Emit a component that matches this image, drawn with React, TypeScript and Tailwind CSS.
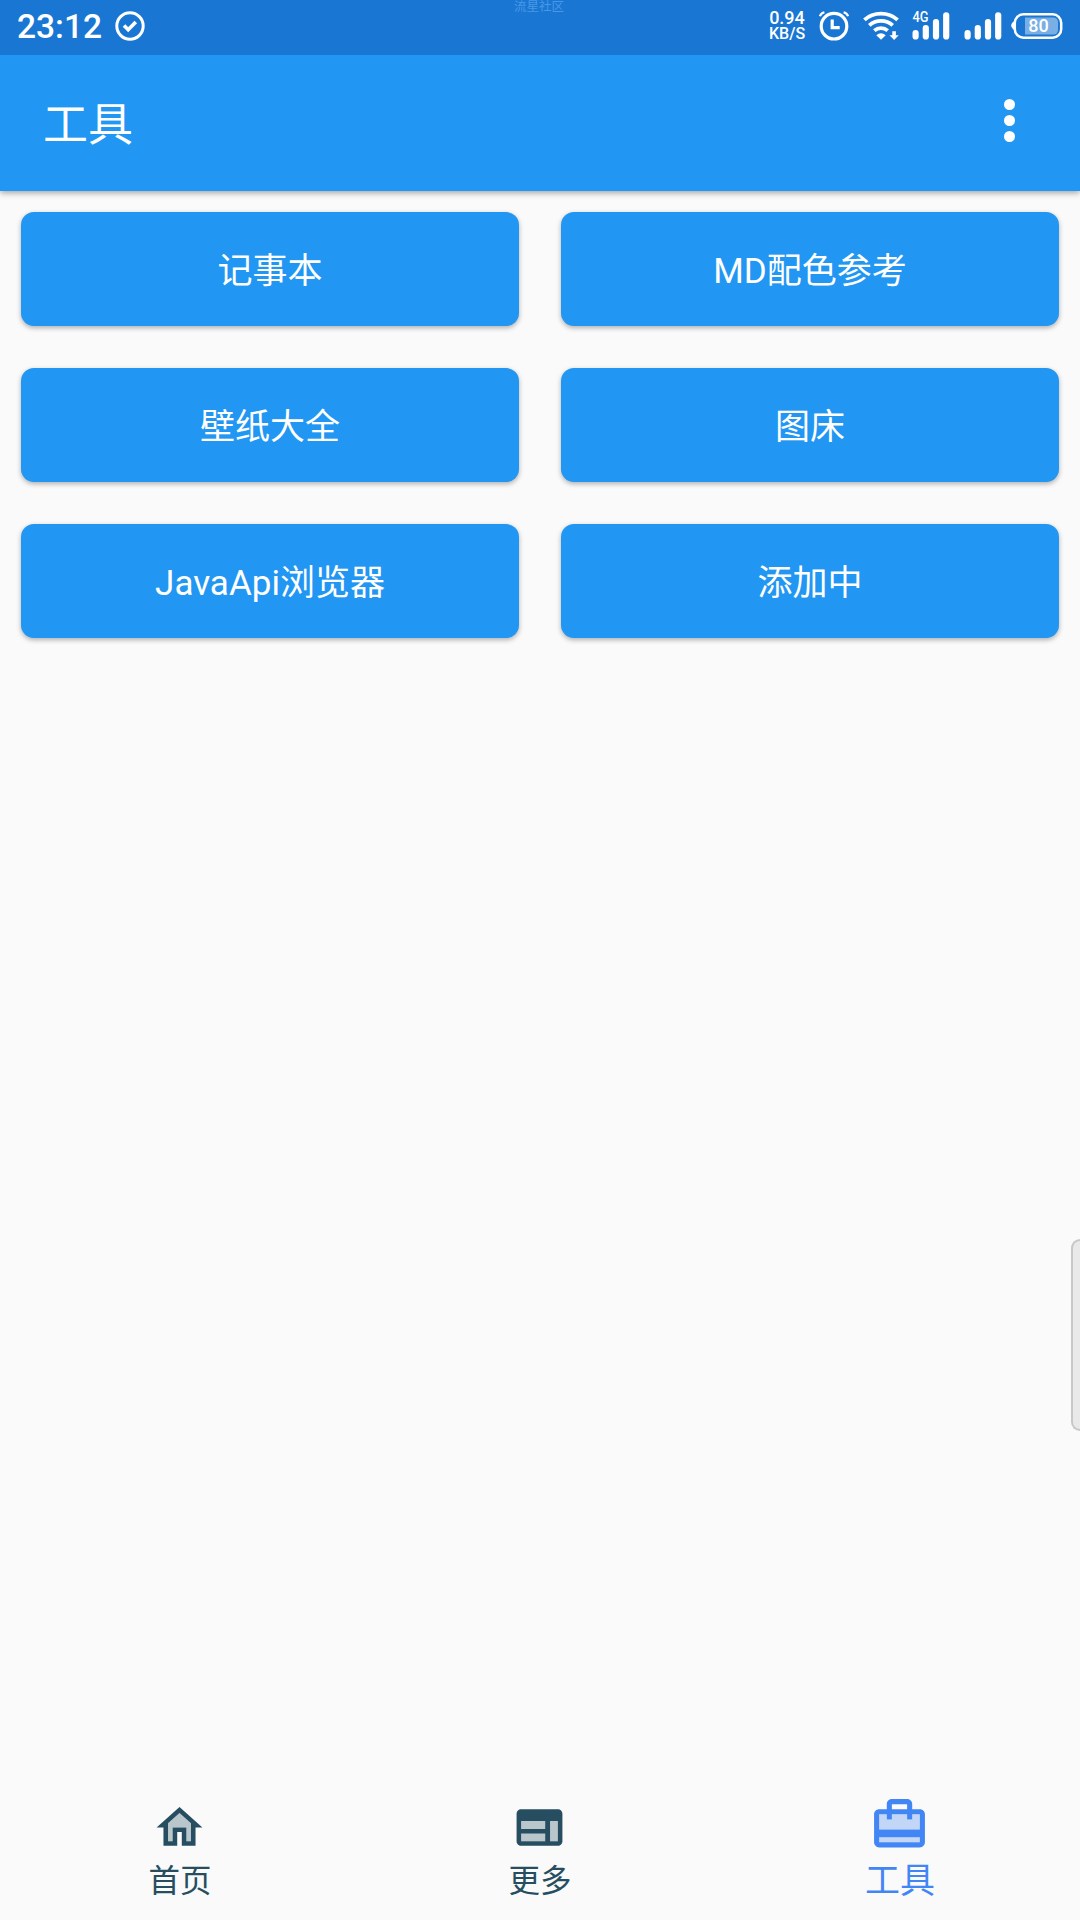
import clsx from 'clsx'
import type { ReactNode } from 'react'

const tools = ['记事本', 'MD配色参考', '壁纸大全', '图床', 'JavaApi浏览器', '添加中']

function CheckIcon() {
  return (
    <svg width="30" height="30" viewBox="0 0 30 30" fill="none" stroke="currentColor">
      <circle cx="15" cy="15" r="13.2" strokeWidth="3" />
      <path d="M9 14.6l4.2 4.2 7.6-7.8" strokeWidth="3.6" />
    </svg>
  )
}

function AlarmIcon() {
  return (
    <svg width="30" height="30" viewBox="0 0 30 30" fill="none" stroke="currentColor">
      <circle cx="15" cy="15.2" r="12.8" strokeWidth="3.2" />
      <path d="M13.2 8.5v8.2h7.5" strokeWidth="3.2" />
      <path d="M.9 5.2Q2 2 5.4 1.2M29.1 5.2Q28 2 24.6 1.2" strokeWidth="2.2" />
    </svg>
  )
}

function WifiIcon() {
  return (
    <svg width="36" height="30" viewBox="0 0 36 30" fill="none" stroke="currentColor">
      <path d="M1.4 8.8C10.5.6 25.5.6 34.6 8.8" strokeWidth="3.8" />
      <path d="M6.3 14.3C12.8 8.5 23.2 8.5 29.7 14.3" strokeWidth="3.8" />
      <path d="M11.3 19.7C15.2 16.2 20.8 16.2 24.7 19.7" strokeWidth="3.8" />
      <path d="M13.3 24.2q4.7-3.8 9.4 0L18 28.8z" fill="currentColor" stroke="none" />
      <path d="M29.3 20.3h3.6v4h2.8L31.1 29l-4.6-4.7h2.8z" fill="currentColor" stroke="none" />
    </svg>
  )
}

function SignalIcon({ label }: { label?: string }) {
  return (
    <svg width="38" height="30" viewBox="0 0 38 30" fill="currentColor" className="overflow-visible">
      <rect x="0.5" y="19" width="6.2" height="9.5" rx="3.1" />
      <rect x="10.7" y="14" width="6.2" height="14.5" rx="3.1" />
      <rect x="20.9" y="8" width="6.2" height="20.5" rx="3.1" />
      <rect x="31.1" y="1.2" width="6.2" height="27.3" rx="3.1" />
      {label && (
        <text x="0.5" y="11.4" fontSize="14" fontWeight="500" textLength="16" lengthAdjust="spacingAndGlyphs">
          {label}
        </text>
      )}
    </svg>
  )
}

function BatteryIcon({ level }: { level: number }) {
  return (
    <svg width="52" height="26" viewBox="0 0 52 26" fill="currentColor">
      <path d="M4 7.5Q.2 10 .2 12.5T4 17.5z" />
      <rect x="3.8" y="1.3" width="46.4" height="23.4" rx="8.5" fill="none" stroke="currentColor" strokeWidth="2.5" />
      <path d="M14 4.5h28.5a4.5 4.5 0 0 1 4.5 4.500v8a4.5 4.5 0 0 1-4.5 4.500H14z" opacity=".42" />
      <text x="27.6" y="19.2" fontSize="18" fontWeight="500" textAnchor="middle">
        {level}
      </text>
    </svg>
  )
}

function HomeIcon() {
  return (
    <>
      <path d="M7 10.19V18h2v-6h6v6h2v-7.81l-5-4.5z" opacity=".3" />
      <path d="M12 3L2 12h3v8h6v-6h2v6h6v-8h3L12 3zm5 15h-2v-6H9v6H7v-7.81l5-4.5 5 4.5V18z" />
    </>
  )
}

function WebIcon() {
  return (
    <>
      <path d="M4 9h11v4H4zm0 5h11v4H4zm12-5h4v9h-4z" opacity=".3" />
      <path d="M20 4H4c-1.1 0-2 .9-2 2v12c0 1.1.9 2 2 2h16c1.1 0 2-.9 2-2V6c0-1.1-.9-2-2-2zM14.5 18H4v-3.4h10.5V18zm0-5.3H4V9.2h10.5v3.5zM20 18h-3.4V9.2H20V18z" />
    </>
  )
}

function TravelIcon() {
  return (
    <>
      <path d="M4 17h16v2H4zm13-7h-2V8H9v2H7V8H4v6h16V8h-3z" opacity=".3" />
      <path d="M20 6h-3V4c0-1.11-.89-2-2-2H9c-1.11 0-2 .89-2 2v2H4c-1.11 0-2 .89-2 2v11c0 1.11.89 2 2 2h16c1.11 0 2-.89 2-2V8c0-1.11-.89-2-2-2zM9 4h6v2H9V4zm11 15H4v-2h16v2zm0-5H4V8h3v2h2V8h6v2h2V8h3v6z" />
    </>
  )
}

function NavItem({ label, active, children }: { label: string; active?: boolean; children: ReactNode }) {
  return (
    <button
      className={clsx(
        'flex flex-1 flex-col items-center',
        active ? 'pt-[9px] text-[#4285f4]' : 'pt-[15px] text-[#264e60]',
      )}
    >
      <svg
        viewBox="0 0 24 24"
        fill="currentColor"
        className={clsx('mr-[2px]', active ? 'size-[61px]' : 'size-[55px]')}
      >
        {children}
      </svg>
      <span className={clsx('mt-[4px] leading-[46px]', active ? 'text-[35px]' : 'text-[31.5px]')}>{label}</span>
    </button>
  )
}

function StatusBar() {
  return (
    <div className="relative flex h-[55px] justify-between bg-[#1976d2] pr-[17px] pl-[17px] text-white">
      <div className="flex pt-[11px]">
        <span className="w-[98px] text-[33.5px] leading-[31px] font-medium">23:12</span>
        <CheckIcon />
      </div>
      <span className="absolute top-0 left-[514px] text-[12.5px] leading-[13px] text-[#4a98e6]">流星社区</span>
      <div className="flex pt-[10px]">
        <div className="mr-[13px] flex w-[38px] flex-col items-center font-medium">
          <span className="text-[18px] leading-[16px]">0.94</span>
          <span className="text-[16px] leading-[16px]">KB/S</span>
        </div>
        <div className="mr-[14px] pt-px">
          <AlarmIcon />
        </div>
        <div className="mr-[13px] pt-px">
          <WifiIcon />
        </div>
        <div className="mr-[14px] pt-px">
          <SignalIcon label="4G" />
        </div>
        <div className="mr-[9px] pt-px">
          <SignalIcon />
        </div>
        <div className="pt-[3px]">
          <BatteryIcon level={80} />
        </div>
      </div>
    </div>
  )
}

export default function App() {
  return (
    <div className="relative flex h-[1920px] w-[1080px] flex-col overflow-hidden bg-[#fafafa] font-['Roboto','Noto_Sans_CJK_SC',sans-serif]">
      <StatusBar />
      <header className="flex h-[136px] items-center justify-between bg-[#2196f3] pr-[65px] pl-[43px] text-white shadow-[0_2px_6px_rgba(0,0,0,0.35)]">
        <h1 className="pt-[5px] text-[45px] leading-[60px]">工具</h1>
        <button className="mb-[6px] flex flex-col gap-[5px]">
          <span className="size-[11px] rounded-full bg-white" />
          <span className="size-[11px] rounded-full bg-white" />
          <span className="size-[11px] rounded-full bg-white" />
        </button>
      </header>

      <main className="grid flex-1 auto-rows-[114px] grid-cols-2 content-start gap-[42px] p-[21px]">
        {tools.map((tool) => (
          <button
            key={tool}
            className="rounded-[13px] bg-[#2196f3] pt-[5px] text-[35px] leading-[50px] text-white shadow-[0_2px_5px_rgba(0,0,0,0.3)]"
          >
            {tool}
          </button>
        ))}
      </main>

      <nav className="flex h-[135px]">
        <NavItem label="首页">
          <HomeIcon />
        </NavItem>
        <NavItem label="更多">
          <WebIcon />
        </NavItem>
        <NavItem label="工具" active>
          <TravelIcon />
        </NavItem>
      </nav>

      {/* edge handle of the system side panel */}
      <div className="absolute top-[1239px] right-0 h-[192px] w-[9px] rounded-l-[9px] border-2 border-r-0 border-[#c8c8c8] bg-[#e9e9e9]" />
    </div>
  )
}
